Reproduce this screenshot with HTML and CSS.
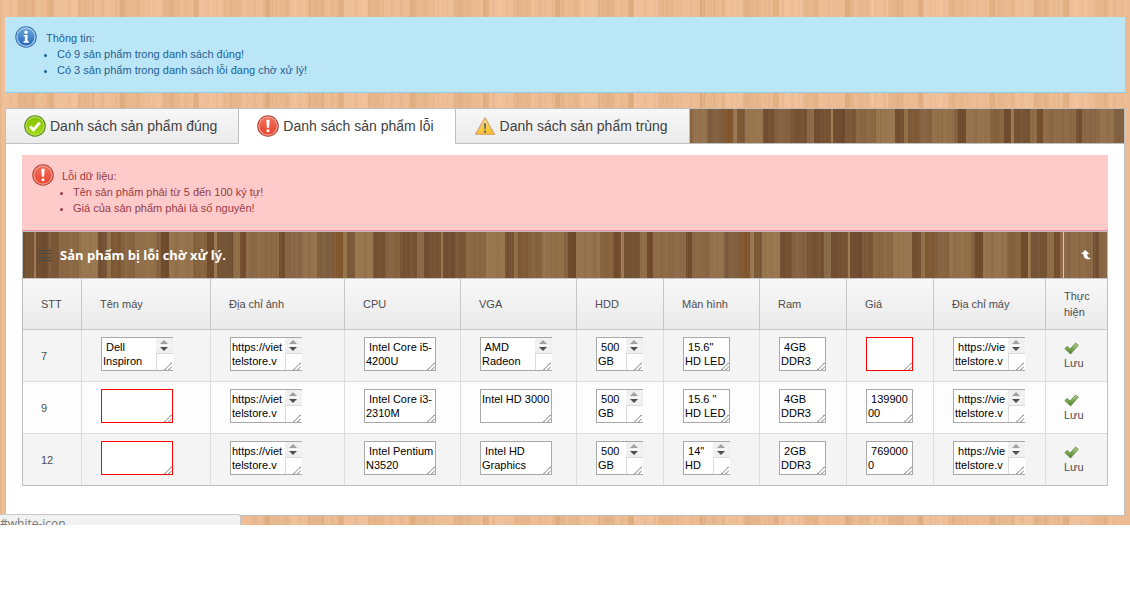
FILE: index.html
```
<!DOCTYPE html>
<html lang="vi">
<head>
<meta charset="utf-8">
<title>Danh sách sản phẩm</title>
<link rel="stylesheet" href="styles.css">
</head>
<body>
<svg class="symbols" aria-hidden="true">
  <defs>
    <linearGradient id="g-blue" x1="0" y1="0" x2="0" y2="1"><stop offset="0" stop-color="#68a5df"/><stop offset="1" stop-color="#2468b8"/></linearGradient>
    <linearGradient id="g-red" x1="0" y1="0" x2="0" y2="1"><stop offset="0" stop-color="#f0705c"/><stop offset="1" stop-color="#ea4430"/></linearGradient>
    <linearGradient id="g-green" x1="0" y1="0" x2="0" y2="1"><stop offset="0" stop-color="#86c400"/><stop offset="1" stop-color="#a2d911"/></linearGradient>
    <linearGradient id="g-yellow" x1="0" y1="0" x2="0" y2="1"><stop offset="0" stop-color="#ffe182"/><stop offset="1" stop-color="#f9bd25"/></linearGradient>
    <linearGradient id="g-tick" x1="0" y1="0" x2="0" y2="1"><stop offset="0" stop-color="#b5d889"/><stop offset="1" stop-color="#467d25"/></linearGradient>
    <symbol id="i-info" viewBox="0 0 20 20">
      <circle cx="10" cy="10" r="9.8" fill="#3973b1"/><circle cx="10" cy="10" r="8.8" fill="#b6d4ef"/><circle cx="10" cy="10" r="7.8" fill="url(#g-blue)"/>
      <circle cx="10" cy="5.7" r="1.5" fill="#fff"/><path d="M7.9 8.2h3.5v5.5h1.1v1.5H7.8v-1.5H9V9.6H7.9z" fill="#fff"/>
    </symbol>
    <symbol id="i-error" viewBox="0 0 20 20">
      <circle cx="10" cy="10" r="9.8" fill="#b84235"/><circle cx="10" cy="10" r="8.8" fill="#f7a493"/><circle cx="10" cy="10" r="7.8" fill="url(#g-red)"/>
      <path d="M8.5 4.4h3l-.5 7.2H9z" fill="#fff"/><circle cx="10" cy="14.3" r="1.4" fill="#fff"/>
    </symbol>
    <symbol id="i-ok" viewBox="0 0 20 20">
      <circle cx="10" cy="10" r="9.8" fill="#568b14"/><circle cx="10" cy="10" r="8.8" fill="#bde16b"/><circle cx="10" cy="10" r="7.8" fill="url(#g-green)"/>
      <path d="M5.6 10.5l3 3 5.8-6.6" fill="none" stroke="#fff" stroke-width="2.6"/>
    </symbol>
    <symbol id="i-warn" viewBox="0 0 20 18">
      <path d="M10 1.6L18.6 16.6H1.4z" fill="url(#g-yellow)" stroke="#dba878" stroke-linejoin="round" stroke-width="1.2"/>
      <path d="M9.2 6.5h1.6l-.3 5.5h-1z" fill="#3c4f6c"/><rect x="9.2" y="13.3" width="1.6" height="1.8" fill="#3c4f6c"/>
    </symbol>
    <symbol id="i-tick" viewBox="0 0 15 13">
      <path d="M.8 6.6L3.2 4.4l3 2.6L11.6 1l2.6 2.2L6.6 12z" fill="url(#g-tick)" stroke="#5b8040" stroke-width=".8" stroke-linejoin="round"/>
    </symbol>
    <symbol id="i-grip" viewBox="0 0 8 8">
      <path d="M.5 8L8 .5M4.5 8L8 4.5" stroke="#555" stroke-dasharray="1.4 .3" fill="none"/>
    </symbol>
    <symbol id="i-bar" viewBox="0 0 17 33">
      <path d="M0 0h17v32H0z" fill="#fff"/><path d="M0 0h17v15H0z" fill="#f0f0f0"/><path d="M0 7h15v1H0z" fill="#fff"/>
      <path d="M0 15h17v1H0zM0 15h1v17H0z" fill="#dadada"/><path d="M0 32h17v1H0z" fill="#a9a9a9"/>
      <path d="M4 6l4-4 4 4z" fill="#a0a0a0"/><path d="M4 9h8l-4 4z" fill="#505050"/>
    </symbol>
  </defs>
</svg>

<main class="page">
  <section class="notice info">
    <svg class="badge"><use href="#i-info"/></svg>
    <div>
      <p>Thông tin:</p>
      <ul>
        <li>Có 9 sản phẩm trong danh sách đúng!</li>
        <li>Có 3 sản phẩm trong danh sách lỗi đang chờ xử lý!</li>
      </ul>
    </div>
  </section>

  <section class="tabs">
    <nav class="tab-bar wood">
      <a class="tab" href="#dung"><svg class="badge"><use href="#i-ok"/></svg>Danh sách sản phẩm đúng</a>
      <a class="tab active" href="#loi"><svg class="badge"><use href="#i-error"/></svg>Danh sách sản phẩm lỗi</a>
      <a class="tab" href="#trung"><svg class="badge"><use href="#i-warn"/></svg>Danh sách sản phẩm trùng</a>
    </nav>
    <div class="tab-body">
      <section class="notice error">
        <svg class="badge"><use href="#i-error"/></svg>
        <div>
          <p>Lỗi dữ liệu:</p>
          <ul>
            <li>Tên sản phẩm phải từ 5 đến 100 ký tự!</li>
            <li>Giá của sản phẩm phải là số nguyên!</li>
          </ul>
        </div>
      </section>

      <section class="widget">
        <header class="widget-head wood">
          <svg class="lines" viewBox="0 0 14 11"><path d="M0 .5h14M0 3.5h14M0 7.5h14M0 10.5h14" stroke="#4b4a42"/></svg>
          <h2>Sản phẩm bị lỗi chờ xử lý.</h2>
          <button class="back" type="button" aria-label="Quay lại"><svg viewBox="0 0 10 10"><path d="M4.2 0l4.3 4H6.2c0 2.6 1 4.1 3.8 4.4C8.600 9.800 2.400 10 2.400 4H0z" fill="#fff"/></svg></button>
        </header>
        <table>
          <colgroup><col class="c-no"><col class="c-name"><col class="c-image"><col class="c-chip"><col class="c-chip"><col class="c-small"><col class="c-screen"><col class="c-small"><col class="c-small"><col class="c-link"><col class="c-action"></colgroup>
          <thead>
            <tr><th>STT</th><th>Tên máy</th><th>Địa chỉ ảnh</th><th>CPU</th><th>VGA</th><th>HDD</th><th>Màn hình</th><th>Ram</th><th>Giá</th><th>Địa chỉ máy</th><th>Thực hiện</th></tr>
          </thead>
          <tbody>
            <tr>
              <td>7</td>
              <td><div class="field"><textarea aria-label="Tên máy"> Dell
Inspiron</textarea><svg class="bar"><use href="#i-bar"/></svg><svg class="grip"><use href="#i-grip"/></svg></div></td>
              <td><div class="field"><textarea aria-label="Địa chỉ ảnh">https://viet
telstore.v</textarea><svg class="bar"><use href="#i-bar"/></svg><svg class="grip"><use href="#i-grip"/></svg></div></td>
              <td><div class="field"><textarea aria-label="CPU"> Intel Core i5-
4200U</textarea><svg class="grip"><use href="#i-grip"/></svg></div></td>
              <td><div class="field"><textarea aria-label="VGA"> AMD
Radeon</textarea><svg class="bar"><use href="#i-bar"/></svg><svg class="grip"><use href="#i-grip"/></svg></div></td>
              <td><div class="field small"><textarea aria-label="HDD"> 500
GB</textarea><svg class="bar"><use href="#i-bar"/></svg><svg class="grip"><use href="#i-grip"/></svg></div></td>
              <td><div class="field small"><textarea aria-label="Màn hình"> 15.6"
HD LED</textarea><svg class="grip"><use href="#i-grip"/></svg></div></td>
              <td><div class="field small"><textarea aria-label="Ram"> 4GB
DDR3</textarea><svg class="grip"><use href="#i-grip"/></svg></div></td>
              <td><div class="field small invalid"><textarea aria-label="Giá"></textarea><svg class="grip"><use href="#i-grip"/></svg></div></td>
              <td><div class="field"><textarea aria-label="Địa chỉ máy"> https://vie
ttelstore.v</textarea><svg class="bar"><use href="#i-bar"/></svg><svg class="grip"><use href="#i-grip"/></svg></div></td>
              <td><button class="save" type="button"><svg><use href="#i-tick"/></svg>Lưu</button></td>
            </tr>
            <tr>
              <td>9</td>
              <td><div class="field invalid"><textarea aria-label="Tên máy"></textarea><svg class="grip"><use href="#i-grip"/></svg></div></td>
              <td><div class="field"><textarea aria-label="Địa chỉ ảnh">https://viet
telstore.v</textarea><svg class="bar"><use href="#i-bar"/></svg><svg class="grip"><use href="#i-grip"/></svg></div></td>
              <td><div class="field"><textarea aria-label="CPU"> Intel Core i3-
2310M</textarea><svg class="grip"><use href="#i-grip"/></svg></div></td>
              <td><div class="field"><textarea aria-label="VGA">Intel HD 3000</textarea><svg class="grip"><use href="#i-grip"/></svg></div></td>
              <td><div class="field small"><textarea aria-label="HDD"> 500
GB</textarea><svg class="bar"><use href="#i-bar"/></svg><svg class="grip"><use href="#i-grip"/></svg></div></td>
              <td><div class="field small"><textarea aria-label="Màn hình"> 15.6 "
HD LED</textarea><svg class="grip"><use href="#i-grip"/></svg></div></td>
              <td><div class="field small"><textarea aria-label="Ram"> 4GB
DDR3</textarea><svg class="grip"><use href="#i-grip"/></svg></div></td>
              <td><div class="field small"><textarea aria-label="Giá"> 139900
00</textarea><svg class="grip"><use href="#i-grip"/></svg></div></td>
              <td><div class="field"><textarea aria-label="Địa chỉ máy"> https://vie
ttelstore.v</textarea><svg class="bar"><use href="#i-bar"/></svg><svg class="grip"><use href="#i-grip"/></svg></div></td>
              <td><button class="save" type="button"><svg><use href="#i-tick"/></svg>Lưu</button></td>
            </tr>
            <tr>
              <td>12</td>
              <td><div class="field invalid"><textarea aria-label="Tên máy"></textarea><svg class="grip"><use href="#i-grip"/></svg></div></td>
              <td><div class="field"><textarea aria-label="Địa chỉ ảnh">https://viet
telstore.v</textarea><svg class="bar"><use href="#i-bar"/></svg><svg class="grip"><use href="#i-grip"/></svg></div></td>
              <td><div class="field"><textarea aria-label="CPU"> Intel Pentium
N3520</textarea><svg class="grip"><use href="#i-grip"/></svg></div></td>
              <td><div class="field"><textarea aria-label="VGA"> Intel HD
Graphics</textarea><svg class="grip"><use href="#i-grip"/></svg></div></td>
              <td><div class="field small"><textarea aria-label="HDD"> 500
GB</textarea><svg class="bar"><use href="#i-bar"/></svg><svg class="grip"><use href="#i-grip"/></svg></div></td>
              <td><div class="field small"><textarea aria-label="Màn hình"> 14"
HD</textarea><svg class="bar"><use href="#i-bar"/></svg><svg class="grip"><use href="#i-grip"/></svg></div></td>
              <td><div class="field small"><textarea aria-label="Ram"> 2GB
DDR3</textarea><svg class="grip"><use href="#i-grip"/></svg></div></td>
              <td><div class="field small"><textarea aria-label="Giá"> 769000
0</textarea><svg class="grip"><use href="#i-grip"/></svg></div></td>
              <td><div class="field"><textarea aria-label="Địa chỉ máy"> https://vie
ttelstore.v</textarea><svg class="bar"><use href="#i-bar"/></svg><svg class="grip"><use href="#i-grip"/></svg></div></td>
              <td><button class="save" type="button"><svg><use href="#i-tick"/></svg>Lưu</button></td>
            </tr>
          </tbody>
        </table>
      </section>
    </div>
  </section>
  <div class="status">#white-icon</div>
</main>
</body>
</html>
```
FILE: styles.css
```
* { box-sizing: border-box; }
body {
  margin: 0;
  background: #fff;
  color: #4d4d4d;
  font: 11px/16px "Liberation Sans", Arial, sans-serif;
}
p, ul, h2 { margin: 0; }
.symbols { position: absolute; width: 0; height: 0; }

.page {
  position: relative;
  overflow: hidden;
  padding: 17px 5px 9px;
  background:
    repeating-linear-gradient(90deg, rgba(180,115,65,.07) 0 2px, transparent 2px 9px, rgba(180,115,65,.06) 9px 12px, transparent 12px 23px),
    repeating-linear-gradient(90deg, rgba(200,150,95,.12) 0 1px, transparent 1px 5px, rgba(255,220,180,.12) 5px 7px, transparent 7px 17px),
    repeating-linear-gradient(90deg, #efbf98 0 18px, #e5b48a 18px 34px, #ebbb92 34px 48px, #e2b083 48px 54px, #f0c09a 54px 78px, #e7b68b 78px 94px, #edbc94 94px 120px, #dead7f 120px 125px, #e8b88e 125px 145px);
}

.wood {
  background:
    repeating-linear-gradient(90deg, rgba(70,38,15,.07) 0 1px, transparent 1px 4px, rgba(200,165,120,.07) 4px 5px, transparent 5px 11px),
    repeating-linear-gradient(90deg, rgba(60,30,10,.06) 0 2px, transparent 2px 7px, rgba(190,150,105,.06) 7px 9px, transparent 9px 19px),
    repeating-linear-gradient(90deg,
      #765333 0 11px, #a1805a 11px 13px, #704d30 13px 25px, #7a5837 25px 36px, #8b6844 36px 56px,
      #98764f 56px 75px, #745133 75px 84px, #917048 84px 88px, #7d5936 88px 98px, #866442 98px 112px,
      #92704a 112px 134px, #846140 134px 138px, #6f4b2d 138px 146px, #95734e 146px 170px, #86643f 170px 184px,
      #704c2d 184px 191px, #9c7a54 191px 194px, #755435 194px 210px, #8f6d48 210px 217px, #734d2e 217px 223px,
      #8d6b48 223px 256px, #714e2f 256px 262px, #8a6846 262px 280px, #94724d 280px 294px, #806040 294px 310px,
      #81582f 310px 320px, #98764f 320px 324px, #7b5a39 324px 332px, #98764f 332px 350px, #745133 350px 362px,
      #866442 362px 377px, #755334 377px 394px, #8b6b48 394px 401px, #704d30 401px 407px);
}

.badge { flex: none; width: 22px; height: 22px; }

.notice {
  display: flex;
  gap: 9px;
  height: 76px;
  padding: 9px 10px 0;
}
.notice > div { padding-top: 4px; }
.notice ul { padding-left: 11px; }
.info { background: #bbe6f8; border-bottom: 1px solid #8fcbed; color: #1c5f92; }
.error { gap: 8px; background: #ffcaca; border-bottom: 1px solid #ef8f9f; color: #963d46; }

.tabs { margin-top: 15px; border: 1px solid #bfbfbf; background: #fff; }
.tab-bar { display: flex; height: 35px; border-bottom: 1px solid #bfbfbf; }
.tab {
  display: flex;
  align-items: center;
  gap: 4px;
  height: 35px;
  padding: 0 21px 0 18px;
  border-right: 1px solid #bfbfbf;
  border-bottom: 1px solid #bfbfbf;
  background: linear-gradient(#f7f7f7, #ebebeb);
  color: #404040;
  font-size: 14px;
  text-decoration: none;
  white-space: nowrap;
}
.tab.active { background: #fff; border-bottom-color: #fff; }
.tab-body { padding: 11px 16px 29px; }

.widget { border: 1px solid #bfbfbf; }
.widget-head { display: flex; align-items: center; height: 46px; padding-left: 15px; }
.lines { width: 14px; height: 11px; margin-right: 8px; }
.widget-head h2 { flex: 1; color: #fff; font: bold 13px/20px "Open Sans", sans-serif; }
.back {
  display: flex;
  align-items: center;
  justify-content: center;
  width: 44px;
  height: 46px;
  padding: 0;
  border: 0;
  border-left: 1px solid #d5cabd;
  background: none;
}
.back svg { width: 10px; height: 10px; }

table { width: 100%; table-layout: fixed; border-collapse: separate; border-spacing: 0; }
.c-no { width: 59px; }
.c-name { width: 129px; }
.c-image { width: 134px; }
.c-chip { width: 116px; }
.c-small { width: 87px; }
.c-screen { width: 96px; }
.c-link { width: 112px; }
.c-action { width: 61px; }
th, td { padding: 0 17px 0 18px; border-right: 1px solid #dcdcdc; text-align: left; }
th:last-child, td:last-child { border-right: 0; }
th {
  height: 52px;
  border-right-color: #c6c6c6;
  border-top: 1px solid #c6c6c6;
  border-bottom: 1px solid #c6c6c6;
  background: linear-gradient(#f8f8f8, #eaeaea);
  font-weight: normal;
}
td { height: 52px; border-bottom: 1px solid #dcdcdc; background: #f4f4f4; }
tr:nth-child(even) td { background: #fdfdfd; }
tbody tr:last-child td { height: 51px; border-bottom: 0; }

.field { position: relative; width: 72px; height: 34px; margin: 0 1px 4px; }
.small { width: 47px; }
.field textarea {
  display: block;
  width: 100%;
  height: 34px;
  margin: 0;
  padding: 2px 1px;
  overflow: hidden;
  resize: none;
  border: 1px solid #a9a9a9;
  border-radius: 0;
  background: #fff;
  color: #000;
  font: 11px/14px "Liberation Sans", Arial, sans-serif;
  white-space: pre;
}
.invalid textarea { border-color: #f00; }
.bar { position: absolute; top: 1px; right: 0; width: 17px; height: 33px; }
.grip { position: absolute; right: 1px; bottom: 1px; width: 8px; height: 8px; }

.save {
  display: block;
  padding: 2px 0 0;
  border: 0;
  background: none;
  color: #4d4d4d;
  font: 11px/16px "Liberation Sans", Arial, sans-serif;
  text-align: left;
}
.save svg { display: block; width: 15px; height: 13px; }

.status {
  position: absolute;
  left: 0;
  bottom: 0;
  width: 241px;
  height: 11px;
  overflow: hidden;
  border: 1px solid #c8c8c8;
  border-width: 1px 1px 0 0;
  border-radius: 0 3px 0 0;
  background: #f2f2f2;
  color: #777;
  font: 12px/18px "Open Sans", sans-serif;
}
```
